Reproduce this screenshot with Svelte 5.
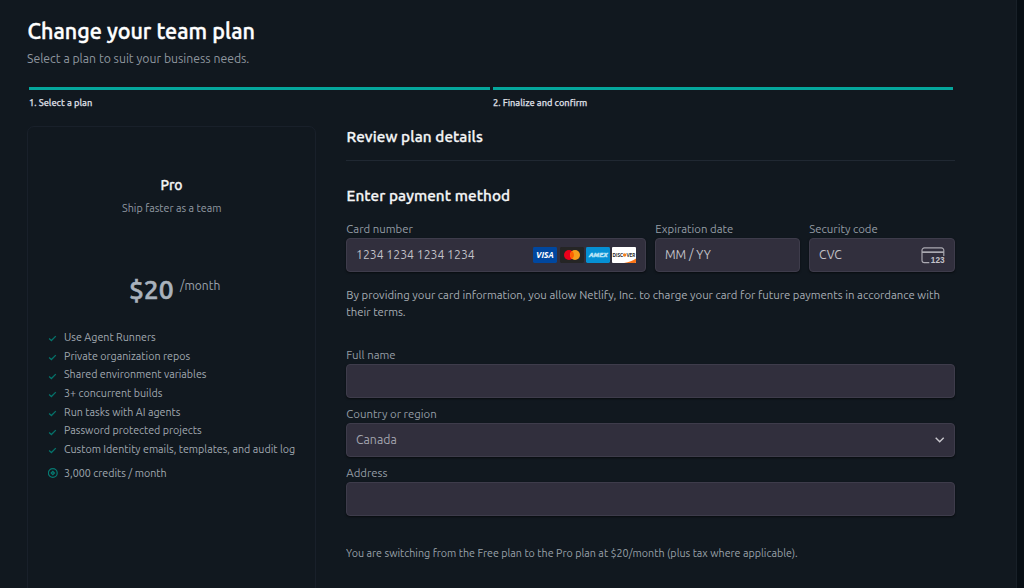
<script>
  const features = [
    'Use Agent Runners',
    'Private organization repos',
    'Shared environment variables',
    '3+ concurrent builds',
    'Run tasks with AI agents',
    'Password protected projects',
    'Custom Identity emails, templates, and audit log'
  ];
  const steps = ['1. Select a plan', '2. Finalize and confirm'];
</script>

<main>
  <header>
    <h1><span>Change your team plan</span></h1>
    <p><span class="narrow">Select a plan to suit your business needs.</span></p>
  </header>

  <ol class="steps">
    {#each steps as step}
      <li><span class="narrow">{step}</span></li>
    {/each}
  </ol>

  <div class="columns">
    <aside>
      <h2><span>Pro</span></h2>
      <p class="tagline"><span class="narrow">Ship faster as a team</span></p>
      <div class="price"><strong>$20</strong><span class="per narrow">/month</span></div>
      <ul>
        {#each features as feature}
          <li>
            <svg width="10" height="10" viewBox="0 0 10 10"><path d="M1.100 5.400 3.400 7.500 7.800 3.100" fill="none" stroke="#05736b" stroke-width="1.300" /></svg>
            <span class="narrow">{feature}</span>
          </li>
        {/each}
        <li class="credits">
          <svg width="10" height="10" viewBox="0 0 10 10"><circle cx="4.800" cy="5" r="4.400" fill="none" stroke="#067a72" stroke-width="1.200" /><path d="M4.800 2.500 7.300 5 4.800 7.500 2.300 5Z" fill="#067a72" /><circle cx="4.800" cy="5" r=".6" fill="#11181f" /></svg>
          <span class="narrow">3,000 credits / month</span>
        </li>
      </ul>
    </aside>

    <section>
      <h2 class="review"><span>Review plan details</span></h2>
      <h2 class="payment"><span>Enter payment method</span></h2>

      <div class="card-row">
        <div class="field">
          <label for="number"><span>Card number</span></label>
          <div class="input" id="number">
            <span class="value narrow">1234 1234 1234 1234</span>
            <div class="brands">
              <svg width="24" height="16" viewBox="0 0 24 16"><rect width="24" height="16" rx="1.4" fill="#00479f" /><text x="3" y="11.2" textLength="18" lengthAdjust="spacingAndGlyphs" font-size="8.8" font-weight="800" font-style="italic" fill="#fff">VISA</text></svg>
              <svg width="24" height="16" viewBox="0 0 24 16"><rect width="24" height="16" rx="1.4" fill="#252525" /><circle cx="9" cy="8" r="5" fill="#eb001b" /><circle cx="15" cy="8" r="5" fill="#f79e1b" /><path d="M12 4a5 5 0 0 1 0 8 5 5 0 0 1 0-8Z" fill="#ff5f00" /></svg>
              <svg width="24" height="16" viewBox="0 0 24 16"><rect width="24" height="16" rx="1.4" fill="#0690d4" /><text x="3" y="10.100" textLength="18.500" lengthAdjust="spacingAndGlyphs" font-size="6" font-weight="800" font-style="italic" fill="#b8e3f6" stroke="#b8e3f6" stroke-width=".5">AMEX</text></svg>
              <svg width="24" height="16" viewBox="0 0 24 16"><rect width="24" height="16" rx="1" fill="#fff" /><path d="M12 16C17 15.200 21 13.500 24 11.500V15a1 1 0 0 1-1 1Z" fill="#f97316" /><text x=".6" y="9.700" textLength="10.500" lengthAdjust="spacingAndGlyphs" font-size="4.800" font-weight="700" fill="#222">DISC</text><circle cx="12.600" cy="8" r="1.700" fill="#f38020" /><text x="14.400" y="9.700" textLength="9" lengthAdjust="spacingAndGlyphs" font-size="4.800" font-weight="700" fill="#222">VER</text></svg>
            </div>
          </div>
        </div>
        <div class="field">
          <label for="expiry"><span>Expiration date</span></label>
          <div class="input" id="expiry"><span class="value narrow">MM / YY</span></div>
        </div>
        <div class="field">
          <label for="cvc"><span>Security code</span></label>
          <div class="input" id="cvc">
            <span class="value narrow">CVC</span>
            <svg width="24" height="17" viewBox="0 0 24 17"><path d="M8.300 15.600H3.400A2.400 2.400 0 0 1 1 13.200V3.300A2.400 2.400 0 0 1 3.400.9H20.400A2.400 2.400 0 0 1 22.800 3.300V9" fill="none" stroke="#aaa9b1" stroke-width="1.150" /><path d="M1 4.300H22.800V6H1Z" fill="#aaa9b1" /><text x="9.800" y="16.200" textLength="13.800" lengthAdjust="spacingAndGlyphs" font-family="Liberation Sans, sans-serif" font-size="8.200" font-weight="700" fill="#c4c3ca">123</text></svg>
          </div>
        </div>
      </div>

      <p class="terms"><span>By providing your card information, you allow Netlify, Inc. to charge your card for future payments in accordance with</span><br /><span>their terms.</span></p>

      <div class="field wide">
        <label for="name"><span>Full name</span></label>
        <div class="input" id="name"></div>
      </div>
      <div class="field wide">
        <label for="country"><span>Country or region</span></label>
        <div class="input" id="country">
          <span class="value country">Canada</span>
          <svg width="10" height="8" viewBox="0 0 10 8"><path d="M.7 1.700 4.700 5.700 8.700 1.700" fill="none" stroke="#c9c8ce" stroke-width="1.400" /></svg>
        </div>
      </div>
      <div class="field wide">
        <label for="address"><span>Address</span></label>
        <div class="input" id="address"></div>
      </div>

      <p class="switching"><span class="narrow">You are switching from the Free plan to the Pro plan at $20/month (plus tax where applicable).</span></p>
    </section>
  </div>
</main>

<style>
  :global(body) { background: #070e14; overflow: hidden; }
  * { box-sizing: border-box; }
  h1, h2, p, ol, ul { margin: 0; padding: 0; }
  ol, ul { list-style: none; }
  svg { display: block; flex: none; }
  .narrow { display: inline-block; transform: scaleX(0.924); transform-origin: left; }
  main {
    width: 1017px;
    height: 588px;
    overflow: hidden;
    padding: 17px 61px 0 27px;
    background: #11181f;
    border-right: 1px solid #182028;
    color: #a3a9b1;
    font-family: Ubuntu, "Noto Sans", sans-serif;
    white-space: nowrap;
  }
  h1 { padding-left: 0.5px; font-size: 21.5px; font-weight: 500; line-height: 28px; color: #fff; letter-spacing: 0.04px; -webkit-text-stroke: 0.45px; }
  header p { margin-top: 4px; font-size: 13px; line-height: 19px; color: #8f979f; }
  header .narrow { transform: scaleX(0.94); }
  .steps { display: flex; gap: 3px; margin: 19px 2px 0; }
  .steps li { flex: 1; border-top: 3px solid #05a69c; padding-top: 6px; height: 39px; font-size: 9.9px; line-height: 14px; font-weight: 500; color: #dcdfe2; -webkit-text-stroke: 0.25px; }
  .steps .narrow { transform: scaleX(0.935); }
  .columns { display: flex; gap: 30px; }
  aside { width: 289px; height: 500px; border: 1px solid #19202a; border-radius: 7px; padding: 48px 20px 0; text-align: center; }
  aside h2 { font-size: 13.9px; line-height: 20px; letter-spacing: 0; }
  .tagline { margin-top: 3px; font-size: 11.6px; line-height: 20px; color: #929aa3; }
  .tagline .narrow { transform-origin: center; }
  .price { display: flex; justify-content: center; gap: 6px; margin-top: 51px; padding-left: 9px; }
  strong { font-size: 26.4px; font-weight: 500; line-height: 40px; color: #a9b2bd; -webkit-text-stroke: 0.6px; }
  .per { margin-top: 6px; font-size: 13px; line-height: 20px; color: #9ca4ad; }
  ul { margin-top: 18px; text-align: left; }
  ul li { display: flex; align-items: center; gap: 6.400px; height: 18.7px; font-size: 11.58px; color: #a1a9b1; }
  ul li svg { margin-top: 4px; }
  .credits { margin-top: 5.800px; }
  .credits svg { margin-top: 0; }
  section { flex: 1; }
  h2 { font-size: 15.3px; font-weight: 500; line-height: 22px; color: #f4f5f6; letter-spacing: 0.08px; -webkit-text-stroke: 0.3px; }
  .review { height: 35px; padding-left: 0.5px; border-bottom: 1px solid #202832; }
  .payment { margin-top: 24px; padding-left: 0.5px; }
  .card-row { display: grid; grid-template-columns: 300px 145px 1fr; gap: 9px; margin-top: 14px; }
  label { display: block; height: 17px; padding-left: 0.3px; font-size: 11.38px; line-height: 15px; color: #959da5; }
  .input { display: flex; align-items: center; justify-content: space-between; height: 34px; padding: 0 9px; border: 1px solid #3e3c4b; border-radius: 4px; background: #312f3d; box-shadow: 0 1px 2px #00000080; }
  .value { font-size: 12.8px; line-height: 20px; margin-top: -2px; color: #c3c2c8; }
  .value.narrow { transform: scaleX(0.955); }
  .value.country { font-size: 12.3px; margin-top: 0; color: #a3a5af; }
  .brands { display: flex; gap: 2.2px; }
  .terms { margin-top: 15px; padding-left: 0.3px; font-size: 11.35px; line-height: 16.5px; color: #a7adb4; }
  .wide { margin-bottom: 8.2px; }
  .terms + .wide { margin-top: 26.600px; }
  .switching { margin-top: 28.500px; padding-left: 0.3px; font-size: 11.6px; line-height: 18px; color: #99a1a9; }
</style>
